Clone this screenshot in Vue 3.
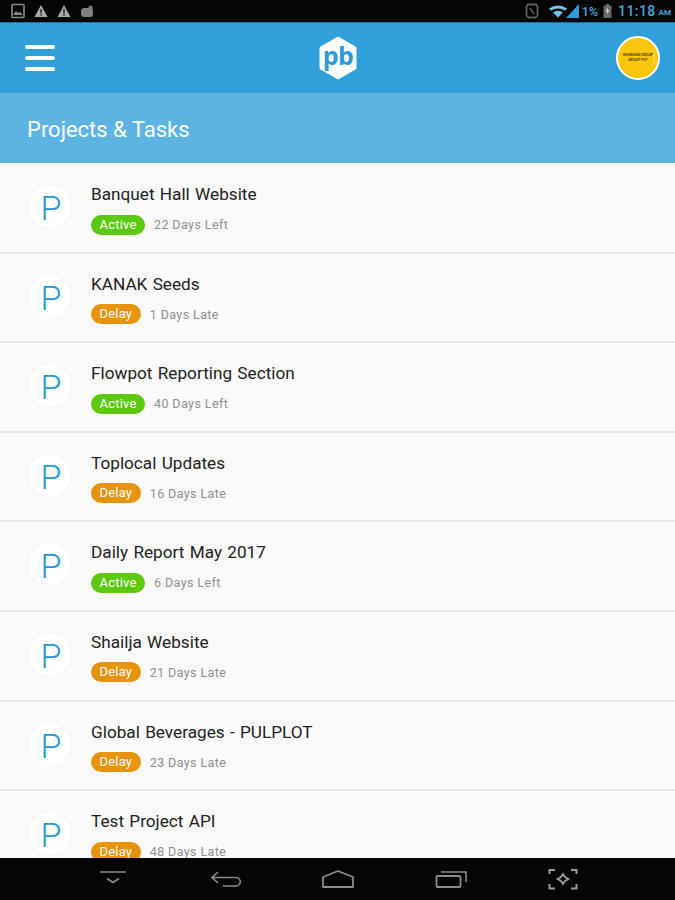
<script setup>
const projects = [
  { name: 'Banquet Hall Website', status: 'Active', note: '22 Days Left' },
  { name: 'KANAK Seeds', status: 'Delay', note: '1 Days Late' },
  { name: 'Flowpot Reporting Section', status: 'Active', note: '40 Days Left' },
  { name: 'Toplocal Updates', status: 'Delay', note: '16 Days Late' },
  { name: 'Daily Report May 2017', status: 'Active', note: '6 Days Left' },
  { name: 'Shailja Website', status: 'Delay', note: '21 Days Late' },
  { name: 'Global Beverages - PULPLOT', status: 'Delay', note: '23 Days Late' },
  { name: 'Test Project API', status: 'Delay', note: '48 Days Late' },
]
</script>

<template>
  <div class="screen">
    <div class="status">
      <div class="status-left">
        <svg width="16" height="16" viewBox="0 0 16 16"><rect x="2" y="1.500" width="12" height="13" rx="1" fill="none" stroke="#8a8a8a" stroke-width="1.600"/><path d="M3 12l3-4 2 2 2-1 3 3z" fill="#8a8a8a"/></svg>
        <svg width="16" height="16" viewBox="0 0 16 16"><path d="M8 2l6.500 12h-13z" fill="#a8a8a8"/><rect x="7.300" y="6" width="1.400" height="4.500" fill="#222"/><rect x="7.300" y="11.200" width="1.400" height="1.400" fill="#222"/></svg>
        <svg width="16" height="16" viewBox="0 0 16 16"><path d="M8 2l6.500 12h-13z" fill="#a8a8a8"/><rect x="7.300" y="6" width="1.400" height="4.500" fill="#222"/><rect x="7.300" y="11.200" width="1.400" height="1.400" fill="#222"/></svg>
        <svg width="16" height="16" viewBox="0 0 16 16"><rect x="2" y="5" width="12" height="9" rx="3" fill="#808080"/><circle cx="11.500" cy="4.500" r="2" fill="#808080"/></svg>
      </div>
      <div class="status-right">
        <svg class="s-phone" width="14" height="16" viewBox="0 0 14 16"><path d="M3 1.500h8l1.500 2v9l-2 2h-7l-2-2v-9z" fill="none" stroke="#5c5c5c" stroke-width="1.800"/><path d="M5 5l4 6" stroke="#5c5c5c" stroke-width="1.500"/></svg>
        <svg class="s-wifi" width="20" height="14" viewBox="0 0 20 14"><path d="M1 4.500Q10-1.500 19 4.500L17 6.800Q10 2 3 6.800z" fill="#6fc4ec"/><path d="M5 8.500Q10 5 15 8.500L10 13.500z" fill="#6fc4ec"/></svg>
        <svg class="s-signal" width="13" height="14" viewBox="0 0 13 14"><path d="M13 0v14H0z" fill="#2f9bd6"/></svg>
        <span class="pct">1%</span>
        <svg class="s-batt" width="9" height="14" viewBox="0 0 9 14"><path d="M3 0h3v1.500h2.500V14H.5V1.500H3z" fill="#6a6a6a"/><path d="M5 3L2.800 7.500h1.700L3.800 11l2.500-4.700H4.700z" fill="#e8e8e8"/></svg>
        <span class="time">11:18</span><span class="ampm">AM</span>
      </div>
    </div>

    <header class="appbar">
      <div class="menu"><i></i><i></i><i></i></div>
      <svg class="logo" width="40" height="46" viewBox="0 0 40 46">
        <path d="M20 1.500L37.500 11.500a2 2 0 0 1 1 1.700V32.800a2 2 0 0 1-1 1.700L20 44.500 2.500 34.500a2 2 0 0 1-1-1.700V13.200a2 2 0 0 1 1-1.700z" fill="#fff"/>
        <text x="20" y="29.500" text-anchor="middle" class="logo-text">pb</text>
      </svg>
      <div class="avatar">
        <span>SHUBHAM GROUP</span>
        <span>GROUP PVT</span>
      </div>
    </header>

    <div class="titlebar">Projects &amp; Tasks</div>

    <main class="list">
      <div v-for="p in projects" :key="p.name" class="row">
        <div class="disc">P</div>
        <div class="info">
          <div class="name">{{ p.name }}</div>
          <div class="meta">
            <span class="pill" :class="p.status === 'Active' ? 'active' : 'delay'">{{ p.status }}</span>
            <span class="note">{{ p.note }}</span>
          </div>
        </div>
      </div>
    </main>

    <nav class="navbar">
      <svg width="28" height="20" viewBox="0 0 28 20"><path d="M1 3h26M8 9.500l6 4 6-4" fill="none" stroke="#8c8c8c" stroke-width="1.600"/></svg>
      <svg width="32" height="20" viewBox="0 0 32 20"><path d="M8 3L2 8.500l6 5.500M2 8.500h24a4 4 0 0 1 0 8.500H13" fill="none" stroke="#8c8c8c" stroke-width="1.600"/></svg>
      <svg width="34" height="20" viewBox="0 0 34 20"><path d="M2 8L17 2l15 6v10H2z" fill="none" stroke="#8c8c8c" stroke-width="1.800" stroke-linejoin="round"/></svg>
      <svg width="32" height="20" viewBox="0 0 32 20"><rect x="1.500" y="7" width="24" height="11" rx="1" fill="none" stroke="#8c8c8c" stroke-width="1.800"/><path d="M6 3h25v10" fill="none" stroke="#8c8c8c" stroke-width="1.600"/></svg>
      <svg width="30" height="22" viewBox="0 0 30 22"><path d="M1.500 6V2H7M23 2h5.500V6M1.500 16v4.500H7M23 20.500h5.500V16" fill="none" stroke="#9a9a9a" stroke-width="2"/><path d="M15 6l2 3 3.500 2-3.500 2-2 3-2-3-3.500-2 3.500-2z" fill="none" stroke="#9a9a9a" stroke-width="1.800"/></svg>
    </nav>
  </div>
</template>

<style>
html, body { margin: 0; padding: 0; background: #fafafa; }
</style>

<style scoped>
.screen {
  width: 675px;
  height: 900px;
  display: flex;
  flex-direction: column;
  overflow: hidden;
  background: #fafafa;
  font-family: Roboto, "Liberation Sans", sans-serif;
}
.status {
  height: 22px;
  flex: none;
  background: #050505;
  display: flex;
  align-items: center;
  justify-content: space-between;
  padding: 0 4px 0 10px;
}
.status-left { display: flex; align-items: center; gap: 7px; }
.status-right { display: flex; align-items: center; color: #4aa6d6; }
.s-phone { margin-right: 9px; }
.s-signal { margin-left: -2px; margin-right: 3px; }
.pct { font-size: 12.500px; font-weight: 500; margin-right: 5px; color: #4aa6d6; }
.s-batt { margin-right: 6px; }
.time { font-size: 14px; font-weight: 500; letter-spacing: 0.4px; }
.ampm { font-size: 8px; font-weight: 700; margin-left: 3px; margin-top: 3px; }

.appbar {
  height: 71px;
  flex: none;
  box-sizing: border-box;
  background: #319fda;
  border-top: 1px solid #1f6f9c;
  display: flex;
  align-items: center;
  justify-content: space-between;
  padding: 0 15px 0 25px;
  position: relative;
}
.menu { display: flex; flex-direction: column; gap: 6.500px; width: 30px; }
.menu i { display: block; height: 4.500px; border-radius: 3px; background: #fff; }
.logo { position: absolute; left: 318px; top: 12px; }
.logo-text { font: 700 25px "Open Sans", Roboto, sans-serif; fill: #2a9bd8; letter-spacing: -0.5px; }
.avatar {
  width: 40px;
  height: 40px;
  border-radius: 50%;
  border: 2px solid #fff;
  background: #fbc60a;
  display: flex;
  flex-direction: column;
  align-items: center;
  justify-content: center;
  color: #5a4500;
  font-size: 3.600px;
  line-height: 5px;
  font-weight: 700;
  white-space: nowrap;
  overflow: hidden;
  position: relative;
}
.avatar::after {
  content: "";
  position: absolute;
  right: 3px;
  top: 12px;
  width: 7px;
  height: 16px;
  border-right: 1px solid #fde37a;
  border-radius: 50%;
}

.titlebar {
  height: 70px;
  flex: none;
  background: #5db4e3;
  color: #fff;
  font-size: 22px;
  line-height: 74px;
  padding-left: 27px;
}

.list { flex: 1; min-height: 0; overflow: hidden; padding-top: 1px; }
.row {
  height: 89.600px;
  box-sizing: border-box;
  border-bottom: 2px solid #e8e8e8;
  display: flex;
  align-items: flex-start;
  padding: 21px 0 0 28px;
  background: #fafafa;
}
.disc {
  width: 43px;
  height: 43px;
  flex: none;
  box-sizing: border-box;
  padding-left: 3px;
  border-radius: 50%;
  background: #fff;
  box-shadow: 0 0 1.500px #e4e4e4;
  color: #1f97dc;
  font-size: 34px;
  font-weight: 300;
  line-height: 47px;
  text-align: center;
}
.info { margin-left: 20px; margin-top: -1px; }
.name {
  font-size: 17.200px;
  word-spacing: 1px;
  line-height: 20px;
  color: #222;
  white-space: nowrap;
}
.meta { display: flex; align-items: center; margin-top: 10.500px; }
.pill {
  height: 20px;
  border-radius: 10px;
  box-sizing: border-box;
  padding: 0 8.500px;
  color: #fff;
  font-size: 13px;
  font-weight: 400;
  line-height: 20px;
  letter-spacing: 0.2px;
}
.pill.active { background: #5cc80e; }
.pill.delay { background: #e8930c; }
.note {
  margin-left: 9px;
  color: #8f8f8f;
  font-size: 12.500px;
  letter-spacing: 0.4px;
}

.navbar {
  height: 42px;
  flex: none;
  background: #050505;
  display: grid;
  grid-template-columns: repeat(5, 112.500px);
  justify-items: center;
  align-items: center;
  padding-left: 57px;
  box-sizing: border-box;
}
</style>
